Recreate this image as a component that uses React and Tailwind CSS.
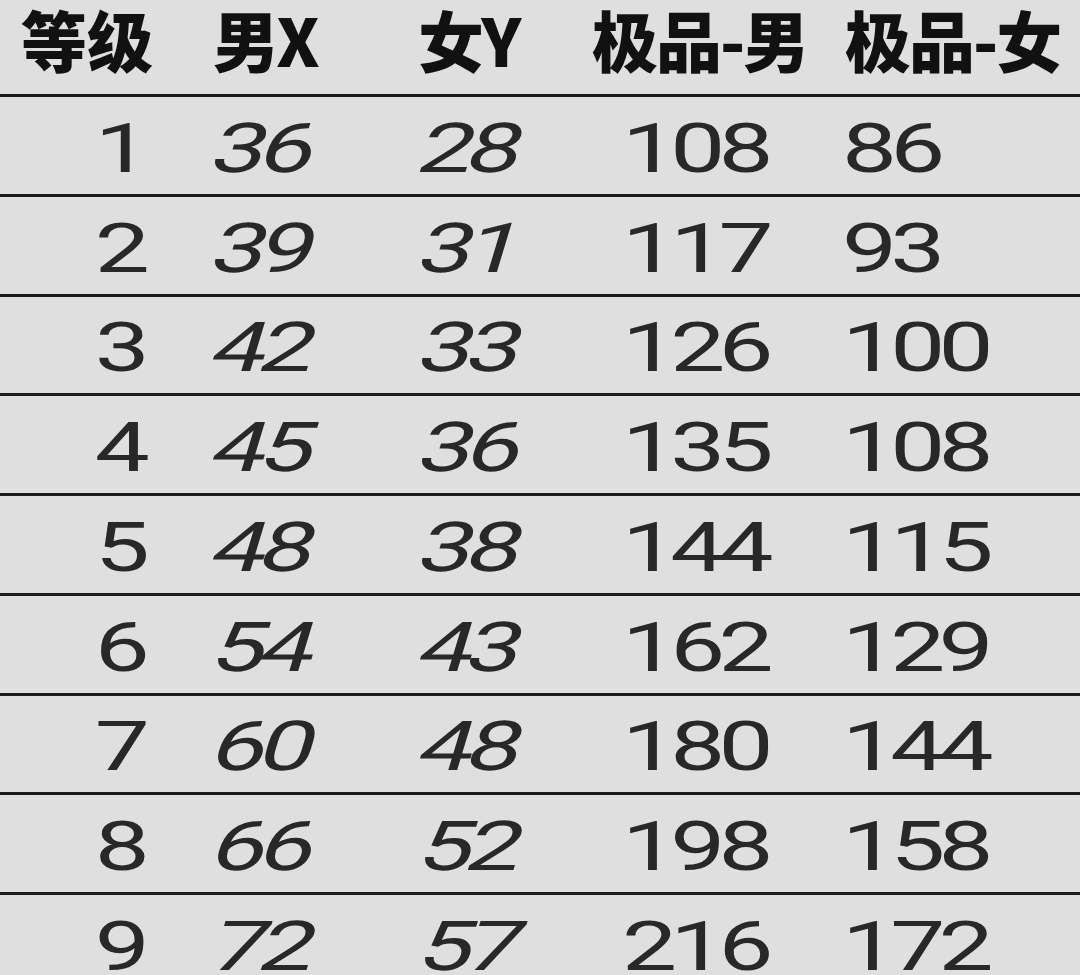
import React from "react";

const rows = [
  [1, 36, 28, 108, 86],
  [2, 39, 31, 117, 93],
  [3, 42, 33, 126, 100],
  [4, 45, 36, 135, 108],
  [5, 48, 38, 144, 115],
  [6, 54, 43, 162, 129],
  [7, 60, 48, 180, 144],
  [8, 66, 52, 198, 158],
  [9, 72, 57, 216, 172],
];

const cjk = { fontFamily: '"Noto Sans CJK SC", "Noto Sans", sans-serif' };
const num = { fontFamily: 'Roboto, "Liberation Sans", sans-serif' };

function Num({ v, italic, right }) {
  return (
    <span
      className={
        "inline-block text-[69px] leading-none tracking-[-0.07em] scale-x-[1.42] text-[#282828] " +
        (right ? "origin-right " : "origin-left ") +
        (italic ? "-skew-x-12" : "")
      }
      style={num}
    >
      {v}
    </span>
  );
}

export default function App() {
  return (
    <div className="w-[1080px] h-[975px] overflow-hidden bg-[#dfdfdf]">
      <div
        className="flex h-[94px] items-start pt-[2px] text-[66px] font-black leading-[72px] text-[#111]"
        style={cjk}
      >
        <div className="w-[213px] pl-[21px]">等级</div>
        <div className="w-[205px] tracking-[-0.04em]">男X</div>
        <div className="w-[174px] tracking-[-0.04em]">女Y</div>
        <div className="w-[253px] tracking-[-0.03em]">极品-男</div>
        <div className="flex-1 tracking-[-0.03em]">极品-女</div>
      </div>
      {rows.map((r) => (
        <div
          key={r[0]}
          className="flex h-[99.75px] items-center pt-[6px] border-t-[3px] border-[#1c1c1c]"
        >
          <div className="w-[213px] pr-[70px] text-right">
            <Num v={r[0]} right />
          </div>
          <div className="w-[205px] pl-[1px]">
            <Num v={r[1]} italic />
          </div>
          <div className="w-[174px] pl-[3px]">
            <Num v={r[2]} italic />
          </div>
          <div className="w-[250px] pl-[30px]">
            <Num v={r[3]} />
          </div>
          <div className="flex-1">
            <Num v={r[4]} />
          </div>
        </div>
      ))}
    </div>
  );
}
